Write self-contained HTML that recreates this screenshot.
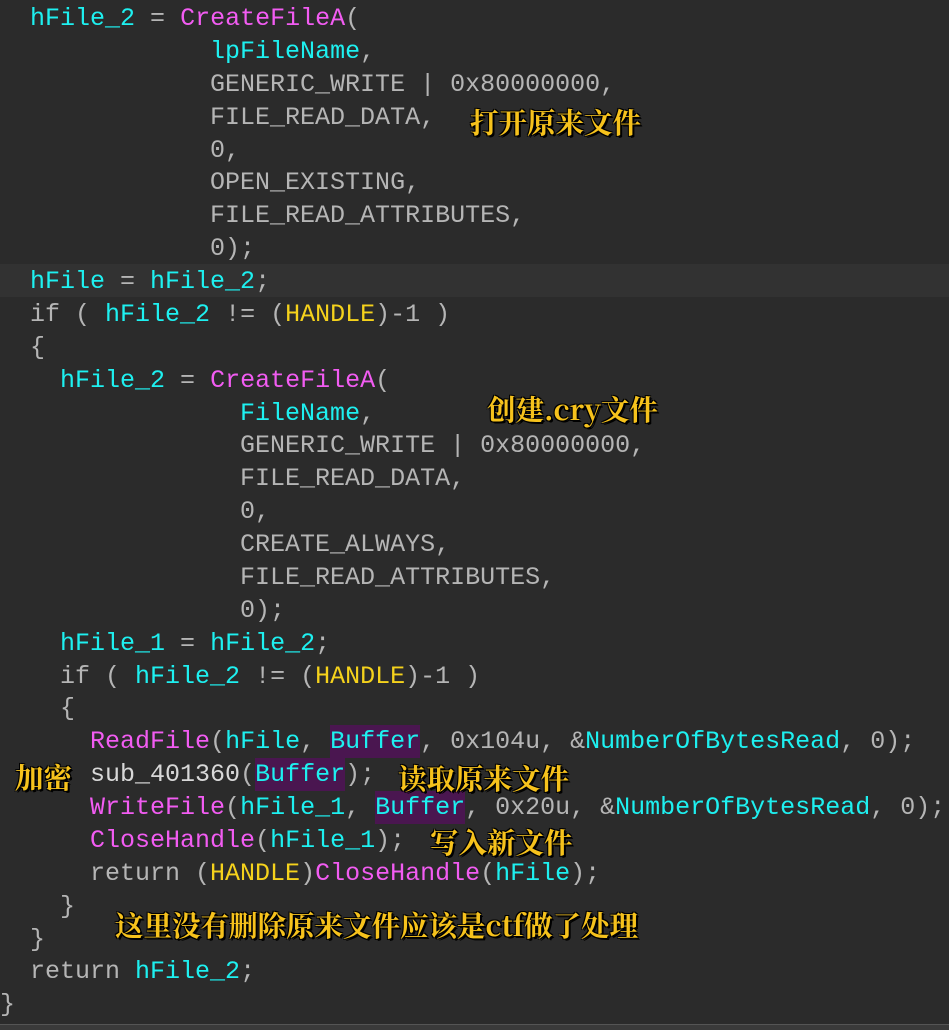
<!DOCTYPE html>
<html><head><meta charset="utf-8"><style>
html,body{margin:0;padding:0;background:#2b2b2b;width:949px;height:1030px;overflow:hidden;position:relative}
.l{position:absolute;left:0;height:33px;line-height:33px;font-family:"Liberation Mono","DejaVu Sans Mono",monospace;font-size:25px;white-space:pre;color:#b5b5b5}
.c{color:#1ef0f0}.m{color:#f25cf2}.y{color:#f5d21c}.w{color:#d8d8d8}
.b{background:#4a1650;display:inline-block;height:33px}
.hl{position:absolute;left:0;top:264px;width:949px;height:33px;background:#323232}
.a{position:absolute;font-family:"Noto Serif CJK SC",serif;font-weight:bold;font-size:28.5px;color:#f6c21c;white-space:nowrap;line-height:32px;
text-shadow:1px 1px 0 #000,-1px -1px 0 #000,1px -1px 0 #000,-1px 1px 0 #000,2px 2px 0 #000}
.bar{position:absolute;left:0;top:1024px;width:949px;height:6px;background:#3a3a3a;border-top:1px solid #555}
</style></head><body>
<div class="hl"></div>
<div class="l" style="top:2px">  <span class="c">hFile_2</span> = <span class="m">CreateFileA</span>(</div>
<div class="l" style="top:35px">              <span class="c">lpFileName</span>,</div>
<div class="l" style="top:68px">              GENERIC_WRITE | 0x80000000,</div>
<div class="l" style="top:101px">              FILE_READ_DATA,</div>
<div class="l" style="top:134px">              0,</div>
<div class="l" style="top:166px">              OPEN_EXISTING,</div>
<div class="l" style="top:199px">              FILE_READ_ATTRIBUTES,</div>
<div class="l" style="top:232px">              0);</div>
<div class="l" style="top:265px">  <span class="c">hFile</span> = <span class="c">hFile_2</span>;</div>
<div class="l" style="top:298px">  if ( <span class="c">hFile_2</span> != (<span class="y">HANDLE</span>)-1 )</div>
<div class="l" style="top:331px">  {</div>
<div class="l" style="top:364px">    <span class="c">hFile_2</span> = <span class="m">CreateFileA</span>(</div>
<div class="l" style="top:397px">                <span class="c">FileName</span>,</div>
<div class="l" style="top:429px">                GENERIC_WRITE | 0x80000000,</div>
<div class="l" style="top:462px">                FILE_READ_DATA,</div>
<div class="l" style="top:495px">                0,</div>
<div class="l" style="top:528px">                CREATE_ALWAYS,</div>
<div class="l" style="top:561px">                FILE_READ_ATTRIBUTES,</div>
<div class="l" style="top:594px">                0);</div>
<div class="l" style="top:627px">    <span class="c">hFile_1</span> = <span class="c">hFile_2</span>;</div>
<div class="l" style="top:660px">    if ( <span class="c">hFile_2</span> != (<span class="y">HANDLE</span>)-1 )</div>
<div class="l" style="top:692px">    {</div>
<div class="l" style="top:725px">      <span class="m">ReadFile</span>(<span class="c">hFile</span>, <span class="c b">Buffer</span>, 0x104u, &amp;<span class="c">NumberOfBytesRead</span>, 0);</div>
<div class="l" style="top:758px">      <span class="w">sub_401360</span>(<span class="c b">Buffer</span>);</div>
<div class="l" style="top:791px">      <span class="m">WriteFile</span>(<span class="c">hFile_1</span>, <span class="c b">Buffer</span>, 0x20u, &amp;<span class="c">NumberOfBytesRead</span>, 0);</div>
<div class="l" style="top:824px">      <span class="m">CloseHandle</span>(<span class="c">hFile_1</span>);</div>
<div class="l" style="top:857px">      return (<span class="y">HANDLE</span>)<span class="m">CloseHandle</span>(<span class="c">hFile</span>);</div>
<div class="l" style="top:890px">    }</div>
<div class="l" style="top:923px">  }</div>
<div class="l" style="top:955px">  return <span class="c">hFile_2</span>;</div>
<div class="l" style="top:988px">}</div>
<div class="a" style="left:470px;top:106px">打开原来文件</div>
<div class="a" style="left:487px;top:393px">创建.cry文件</div>
<div class="a" style="left:15px;top:761px">加密</div>
<div class="a" style="left:398px;top:762px">读取原来文件</div>
<div class="a" style="left:430px;top:826px">写入新文件</div>
<div class="a" style="left:115px;top:909px">这里没有删除原来文件应该是ctf做了处理</div>
<div class="bar"></div>
</body></html>
